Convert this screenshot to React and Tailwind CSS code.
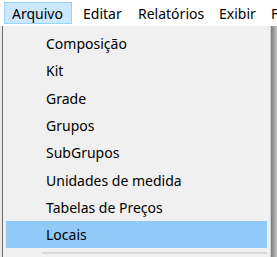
const items = [
  'Composição',
  'Kit',
  'Grade',
  'Grupos',
  'SubGrupos',
  'Unidades de medida',
  'Tabelas de Preços',
  'Locais',
]

export default function App() {
  return (
    <div className="relative h-[257px] w-[277px] overflow-hidden bg-white font-['Noto_Sans',sans-serif] text-[14px] text-black">
      <div className="flex h-[26px] items-center bg-white pl-[4px] whitespace-nowrap">
        <div className="flex h-[22px] w-[68px] items-center border border-[#99d1ff] bg-[#cce8ff] pl-[7px]">Arquivo</div>
        <div className="flex h-[22px] w-[57px] items-center pl-[11px]">Editar</div>
        <div className="flex h-[22px] w-[81px] items-center pl-[9px]">Relatórios</div>
        <div className="flex h-[22px] w-[52px] items-center pl-[9px]">Exibir</div>
        <div className="flex h-[22px] w-[12px] items-center pl-[9px]">F</div>
      </div>

      <div className="flex h-[231px]">
        <div className="w-[3px] border-r border-[#6d6d6d] bg-[#e9e9e9]" />
        <div className="flex w-[268px] flex-col border-r border-[#cfcfcf] bg-[#f0f0f0] px-[3px] pt-[4px]">
          {items.map((t, i) => (
            <div
              key={t}
              className={
                i === items.length - 1
                  ? 'flex h-[27.3px] items-center bg-[#91c9f7] pl-[40px]'
                  : 'flex h-[27.3px] items-center pl-[40px]'
              }
            >
              {t}
            </div>
          ))}
          <div className="mt-[4px] ml-[36px] h-[2px] bg-[#dadada]" />
        </div>
        <div className="flex-1 bg-gradient-to-r from-[#7a7a7a] to-[#c8c8c8]" />
      </div>
    </div>
  )
}
